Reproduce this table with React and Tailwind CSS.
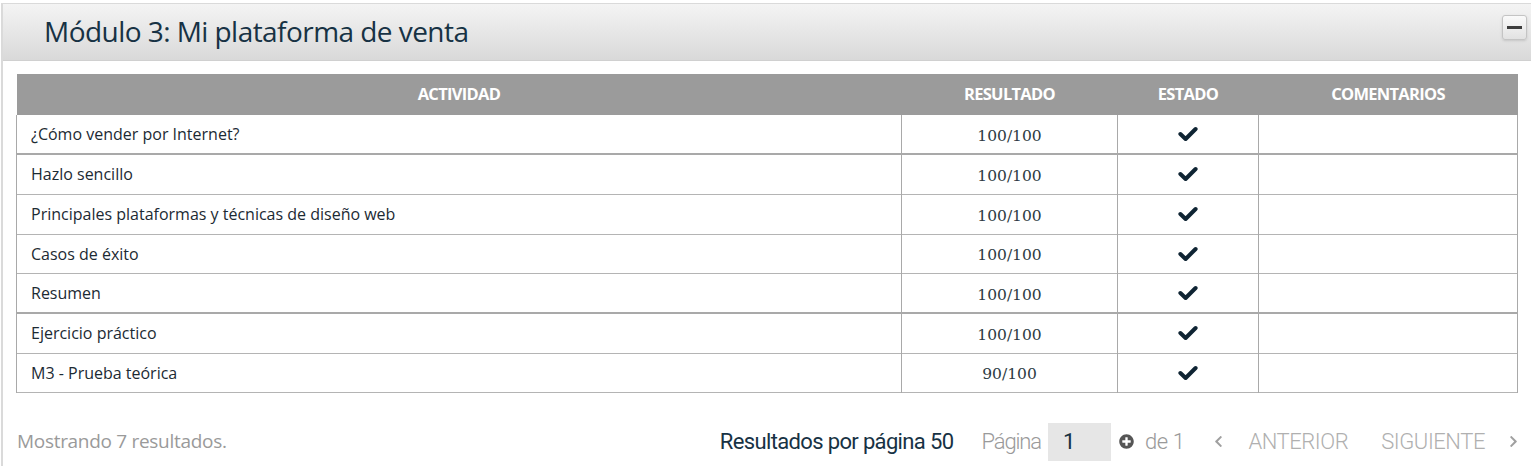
import React from 'react';
import { FaPlusCircle, FaChevronLeft, FaChevronRight } from 'react-icons/fa';

const rows = [
  { name: '¿Cómo vender por Internet?', score: '100/100', h: 'h-[39px]', thick: true },
  { name: 'Hazlo sencillo', score: '100/100', h: 'h-[40px]' },
  { name: 'Principales plataformas y técnicas de diseño web', score: '100/100', h: 'h-[40px]' },
  { name: 'Casos de éxito', score: '100/100', h: 'h-[39px]' },
  { name: 'Resumen', score: '100/100', h: 'h-[40px]', thick: true },
  { name: 'Ejercicio práctico', score: '100/100', h: 'h-[40px]' },
  { name: 'M3 - Prueba teórica', score: '90/100', h: 'h-[39px]' },
];

const Check = () => (
  <svg width="20" height="16" viewBox="0 0 20 16" className="text-[#0f2433]">
    <path d="M2.4 8 L7.6 13 L17.6 3" fill="none" stroke="currentColor" strokeWidth="4" strokeLinejoin="round" strokeLinecap="round" />
  </svg>
);

const App = () => {
  return (
    <div className="w-[1531px] h-[466px] bg-white pt-[3px] font-['Open_Sans',sans-serif] overflow-hidden">
      <div className="border-t border-l-[2px] border-[#dadada] ml-[1px] h-full">
        {/* Panel header */}
        <div className="h-[57px] bg-gradient-to-b from-[#f4f4f4] to-[#d9d9d9] border-b border-[#d0d0d0] flex items-center justify-between pl-[41px] pr-[4px]">
          <h2 className="text-[28px] text-[#173244] tracking-[-0.55px] mt-[-3px]">Módulo 3: Mi plataforma de venta</h2>
          <button className="w-[25px] h-[25px] mb-[9px] rounded-[3px] border border-[#c4c4c4] bg-gradient-to-b from-[#fafafa] to-[#e2e2e2] flex items-center justify-center shadow-sm">
            <span className="block w-[15px] h-[3px] bg-[#3d3d3d]"></span>
          </button>
        </div>

        {/* Table */}
        <div className="pl-[13px] pr-[12px] pt-[13px]">
          <table className="w-[1502px] border-collapse text-[16px] text-[#1c2a33]">
            <thead>
              <tr className="bg-[#9b9b9b] text-white h-[41px]">
                <th className="w-[885px] font-bold tracking-[-0.7px] text-[16.5px]">ACTIVIDAD</th>
                <th className="w-[216px] font-bold tracking-[-0.7px] text-[16.5px]">RESULTADO</th>
                <th className="w-[141px] font-bold tracking-[-0.7px] text-[16.5px]">ESTADO</th>
                <th className="font-bold tracking-[-0.7px] text-[16.5px]">COMENTARIOS</th>
              </tr>
            </thead>
            <tbody>
              {rows.map((r) => (
                <tr
                  key={r.name}
                  className={`${r.h} ${r.thick ? 'border-b-2 border-[#a9a9a9]' : 'border-b border-[#b4b4b4]'}`}
                >
                  <td className="border-l border-[#a9a9a9] pl-[14px]">{r.name}</td>
                  <td className="border-l border-[#a9a9a9] text-center font-['DejaVu_Serif',serif] text-[15.5px] text-[#2c3a42] pt-[5px]">{r.score}</td>
                  <td className="border-l border-[#a9a9a9]">
                    <div className="flex justify-center">
                      <Check />
                    </div>
                  </td>
                  <td className="border-l border-r border-[#a9a9a9]"></td>
                </tr>
              ))}
            </tbody>
          </table>
        </div>

        {/* Footer */}
        <div className="flex items-center justify-between pl-[14px] pr-[12px] mt-[30px] h-[38px]">
          <span className="text-[19px] text-[#9a9a9a] tracking-[-0.3px]">Mostrando 7 resultados.</span>
          <div className="flex items-center font-['Roboto',sans-serif] text-[22px] tracking-[-0.45px]">
            <span className="text-[#173244] tracking-[-0.65px] mr-[28px]">Resultados por página 50</span>
            <span className="text-[#9a9a9a] font-light tracking-[-1.1px] mr-[7px]">Página</span>
            <div className="w-[63px] h-[38px] bg-[#e6e6e6] flex items-center pl-[15px] text-[#173244]">1</div>
            <FaPlusCircle className="w-[15px] h-[15px] text-[#555] ml-[8px] mr-[11px]" />
            <span className="text-[#9a9a9a] font-light">de 1</span>
            <FaChevronLeft className="w-[11px] h-[13px] text-[#a0a0a0] ml-[29px]" />
            <span className="text-[#b0b0b0] font-light ml-[24px]">ANTERIOR</span>
            <span className="text-[#b0b0b0] font-light ml-[33px]">SIGUIENTE</span>
            <FaChevronRight className="w-[11px] h-[13px] text-[#a0a0a0] ml-[23px]" />
          </div>
        </div>
      </div>
    </div>
  );
};

export default App;
